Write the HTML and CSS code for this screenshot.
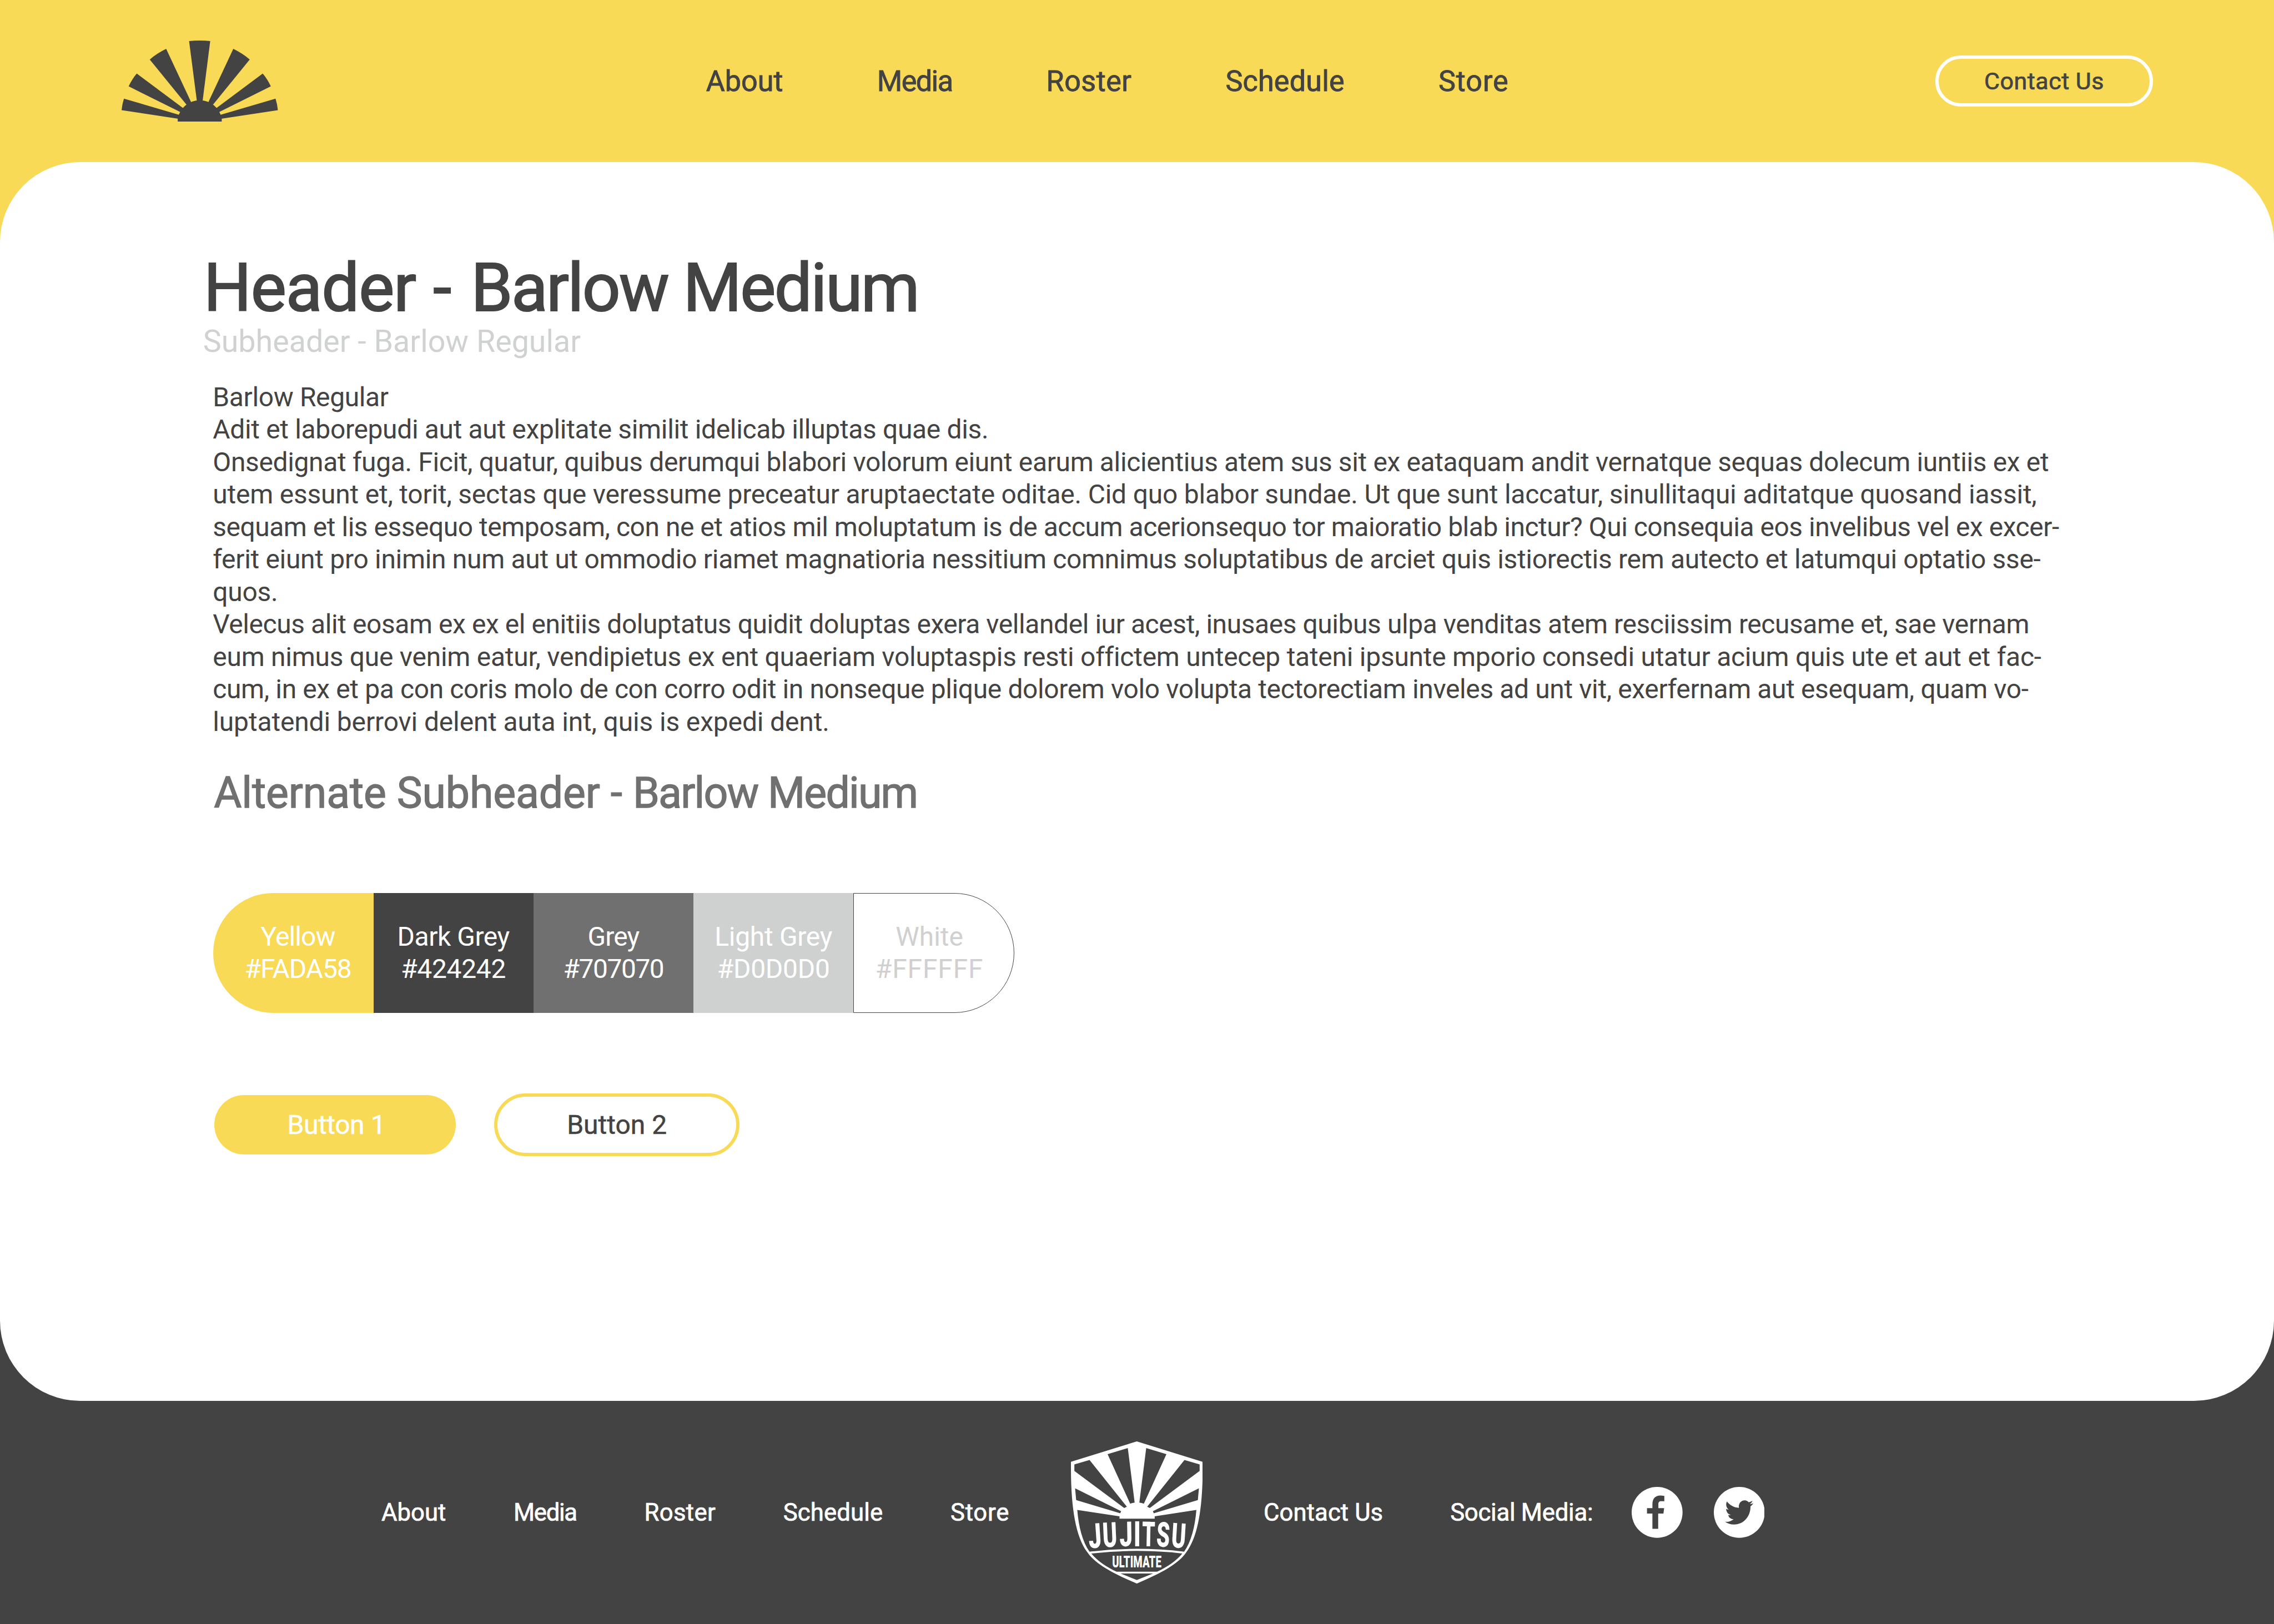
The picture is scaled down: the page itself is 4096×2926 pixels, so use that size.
FILE: index.html
```html
<!DOCTYPE html>
<html lang="en">
<head>
<meta charset="utf-8">
<title>Jujitsu Ultimate Style Guide</title>
<link rel="stylesheet" href="styles.css">
</head>
<body>
<div class="page">
  <header class="top">
    <svg class="logo" viewBox="75 75 866 450" fill="#434343" aria-label="Jujitsu Ultimate">
      <path d="M449 78Q508 72 566 78L522 425H494Z"/>
      <g id="rays">
        <path d="M322 121Q272 145 231 180L445 443L467 431Z"/>
        <path d="M159 258Q132 290 114 329L412 477L428 459Z"/>
        <path d="M88 397Q78 428 75 461L400 510L405 490Z"/>
      </g>
      <use href="#rays" transform="matrix(-1 0 0 1 1016 0)"/>
      <path d="M386 525V508A124 124 0 0 1 630 508V525Z"/>
    </svg>
    <nav class="menu medium">
      <a class="about">About</a>
      <a class="media">Media</a>
      <a class="roster">Roster</a>
      <a class="schedule">Schedule</a>
      <a class="store">Store</a>
    </nav>
    <a class="contact medium">Contact Us</a>
  </header>

  <main class="card">
    <h1 class="title medium">Header <span class="dash">-</span> <span class="face">Barlow Medium</span></h1>
    <p class="subtitle">Subheader - Barlow Regular</p>
    <div class="copy">
      <p class="l1">Barlow Regular</p>
      <p class="l2">Adit et laborepudi aut aut explitate similit idelicab illuptas quae dis.</p>
      <p class="l3">Onsedignat fuga. Ficit, quatur, quibus derumqui blabori volorum eiunt earum alicientius atem sus sit ex eataquam andit vernatque sequas dolecum iuntiis ex et</p>
      <p class="l4">utem essunt et, torit, sectas que veressume preceatur aruptaectate oditae. Cid quo blabor sundae. Ut que sunt laccatur, sinullitaqui aditatque quosand iassit,</p>
      <p class="l5">sequam et lis essequo temposam, con ne et atios mil moluptatum is de accum acerionsequo tor maioratio blab inctur? Qui consequia eos invelibus vel ex excer-</p>
      <p class="l6">ferit eiunt pro inimin num aut ut ommodio riamet magnatioria nessitium comnimus soluptatibus de arciet quis istiorectis rem autecto et latumqui optatio sse-</p>
      <p class="l7">quos.</p>
      <p class="l8">Velecus alit eosam ex ex el enitiis doluptatus quidit doluptas exera vellandel iur acest, inusaes quibus ulpa venditas atem resciissim recusame et, sae vernam</p>
      <p class="l9">eum nimus que venim eatur, vendipietus ex ent quaeriam voluptaspis resti offictem untecep tateni ipsunte mporio consedi utatur acium quis ute et aut et fac-</p>
      <p class="l10">cum, in ex et pa con coris molo de con corro odit in nonseque plique dolorem volo volupta tectorectiam inveles ad unt vit, exerfernam aut esequam, quam vo-</p>
      <p class="l11">luptatendi berrovi delent auta int, quis is expedi dent.</p>
    </div>
    <h2 class="alt medium">Alternate Subheader - <span class="face">Barlow Medium</span></h2>
    <div class="swatches">
      <div class="swatch yellow"><span>Yellow</span><span class="hex">#FADA58</span></div>
      <div class="swatch dark"><span>Dark Grey</span><span class="hex">#424242</span></div>
      <div class="swatch grey"><span>Grey</span><span class="hex">#707070</span></div>
      <div class="swatch light"><span>Light Grey</span><span class="hex">#D0D0D0</span></div>
      <div class="swatch white"><span>White</span><span class="hex">#FFFFFF</span></div>
    </div>
    <div class="buttons medium">
      <a class="btn solid">Button 1</a>
      <a class="btn outline">Button 2</a>
    </div>
  </main>

  <footer class="bottom medium">
    <nav class="links">
      <a class="about">About</a>
      <a class="media">Media</a>
      <a class="roster">Roster</a>
      <a class="schedule">Schedule</a>
      <a class="store">Store</a>
    </nav>
    <svg class="shield" viewBox="115 67 730 788">
      <path fill="#fff" d="M480 67L845 180C847 420 822 590 755 680C712 745 620 795 480 855C340 795 248 745 205 680C138 590 113 420 115 180Z"/>
      <g fill="#434343">
        <g id="gaps">
          <path d="M430 104L318 138L443 412Q455 407 468 406Z"/>
          <path d="M218 170L134 195V231L410 436L425 429Z"/>
          <path d="M138 327L144 392L388 465L393 454Z"/>
        </g>
        <use href="#gaps" transform="matrix(-1 0 0 1 962 0)"/>
        <path d="M150 447L384 482V495H579V482L810 447C802 540 782 622 742 678Q480 647 218 678C178 622 158 540 150 447Z"/>
        <path d="M228 688Q480 660 732 688C700 727 650 762 592 789H368C310 762 260 727 228 688Z"/>
        <path d="M390 799H570L480 835Z"/>
      </g>
      <g class="mark">
        <text transform="translate(252 657) rotate(-4) scale(.68 1)">J</text>
        <text transform="translate(333 652) rotate(-2.5) scale(.64 1)">U</text>
        <text transform="translate(421 648) rotate(-1) scale(.68 1)">J</text>
        <text transform="translate(482 648) scale(.68 1)">I</text>
        <text transform="translate(544 648) rotate(1) scale(.6 1)">T</text>
        <text transform="translate(623 651) rotate(2.5) scale(.62 1)">S</text>
        <text transform="translate(708 656) rotate(3.5) scale(.64 1)">U</text>
      </g>
      <text class="tag" x="343" y="764" textLength="273" lengthAdjust="spacingAndGlyphs">ULTIMATE</text>
    </svg>
    <a class="foot-contact">Contact Us</a>
    <span class="social">Social Media:</span>
    <svg class="icon" viewBox="165 143 282 282">
      <circle cx="306" cy="284" r="141" fill="#fff"/>
      <path fill="#434343" d="M280 375V291H250V261H280V240C280 206 298 191 324 191Q336 191 346 193V222H329C317 222 313 228 313 238V261H345L341 291H312V375Z"/>
    </svg>
    <svg class="icon twitter" viewBox="618 143 282 282">
      <circle cx="759" cy="284" r="141" fill="#fff"/>
      <path fill="#434343" transform="translate(680 202) scale(6.54 6.87)" d="M23.953 4.57a10 10 0 01-2.825.775 4.958 4.958 0 002.163-2.723c-.951.555-2.005.959-3.127 1.184a4.92 4.92 0 00-8.384 4.482C7.69 8.095 4.067 6.13 1.64 3.162a4.822 4.822 0 00-.666 2.475c0 1.71.87 3.213 2.188 4.096a4.904 4.904 0 01-2.228-.616v.06a4.923 4.923 0 003.946 4.827 4.996 4.996 0 01-2.212.085 4.936 4.936 0 004.604 3.417 9.867 9.867 0 01-6.102 2.105c-.39 0-.779-.023-1.17-.067a13.995 13.995 0 007.557 2.209c9.053 0 13.998-7.496 13.998-13.985 0-.21 0-.42-.015-.63A9.935 9.935 0 0024 4.59z"/>
    </svg>
  </footer>
</div>
</body>
</html>
```
FILE: styles.css
```css
/* 1rem is one forty-second of the window's width */
html { font-size: calc(100vw / 42); }
* { box-sizing: border-box; }
body { margin: 0; font-family: Roboto, "Liberation Sans", sans-serif; color: #434343; overflow: hidden; }
h1, h2, p { margin: 0; }

/* a weight between regular and medium */
.medium { font-weight: 400; -webkit-text-stroke: .017em currentColor; }

.page {
  height: 100vh;
  display: grid;
  grid-template-rows: 2.995rem 22.885rem 1fr;
  background: linear-gradient(#f9da56 50%, #434343 50%);
}

.top { display: flex; align-items: center; padding: 0 2.24rem 0 2.25rem; }
.logo { width: 2.887rem; height: 1.5rem; }
.menu { display: flex; gap: 1.734rem; margin-left: 7.903rem; font-size: .535rem; }
.about { letter-spacing: 0; }
.media { letter-spacing: -.03em; }
.roster { letter-spacing: .008em; }
.schedule { letter-spacing: .003em; }
.store { letter-spacing: .018em; }
.contact {
  display: flex; align-items: center; justify-content: center;
  width: 4.01rem; height: .937rem; margin-left: auto;
  border: .063rem solid #fff; border-radius: .47rem;
  font-size: .442rem; letter-spacing: .01em;
}

.card { background: #fff; border-radius: 1.48rem; padding: 1.71rem 0 0 3.93rem; }
.title { margin-left: -.17rem; font-size: 1.24rem; line-height: 1.24rem; letter-spacing: -.01em; white-space: nowrap; }
.title .dash { padding: 0 .06em 0 .02em; }
.title .face { letter-spacing: -.0225em; }
.subtitle { margin: .069rem 0 0 -.18rem; font-size: .57rem; line-height: .6rem; color: #d0d2d1; }
.copy { margin-top: .427rem; font-size: .492rem; line-height: .6rem; white-space: nowrap; }
.l1 { letter-spacing: -.0077em; }
.l2 { letter-spacing: -.007em; }
.l3 { letter-spacing: -.0076em; }
.l4 { letter-spacing: -.0045em; }
.l5 { letter-spacing: -.01em; }
.l6 { letter-spacing: -.0064em; }
.l7 { letter-spacing: -.006em; }
.l8 { letter-spacing: -.0089em; }
.l9 { letter-spacing: -.0054em; }
.l10 { letter-spacing: -.0078em; }
.l11 { letter-spacing: -.0029em; }
.alt { margin: .608rem 0 0 .02rem; font-size: .79rem; line-height: .8rem; letter-spacing: -.0015em; color: #707070; }
.alt .face { letter-spacing: -.0235em; }

.swatches { display: grid; grid-template-columns: repeat(4, 2.956rem) 2.975rem; height: 2.215rem; margin: 1.45rem 0 0 .01rem; font-size: .492rem; line-height: .6rem; color: #fff; }
.swatch { display: flex; flex-direction: column; align-items: center; justify-content: center; }
.yellow { background: #f9da56; border-radius: 1.11rem 0 0 1.11rem; padding-left: .17rem; letter-spacing: -.018em; }
.dark { background: #434343; letter-spacing: -.01em; }
.grey { background: #707070; letter-spacing: -.018em; }
.light { background: #cfd1d0; letter-spacing: -.006em; }
.white { border: 1px solid #434343; border-radius: 0 1.11rem 1.11rem 0; padding-right: .17rem; color: #d0d0d0; }
.yellow .hex { letter-spacing: -.022em; }
.dark .hex { letter-spacing: -.007em; }
.grey .hex { letter-spacing: -.031em; }
.white .hex { letter-spacing: .018em; }

.buttons { display: flex; align-items: center; gap: .708rem; margin: 1.49rem 0 0 .033rem; font-size: .492rem; -webkit-text-stroke-width: .011em; }
.btn { display: flex; align-items: center; justify-content: center; border-radius: .58rem; }
.solid { width: 4.46rem; height: 1.1rem; background: #f9da56; color: #fff; letter-spacing: -.008em; padding-left: .04rem; }
.outline { width: 4.527rem; height: 1.155rem; border: .065rem solid #f9da56; }

.bottom { display: flex; align-items: center; padding-left: 7.045rem; color: #fff; font-size: .448rem; }
.links { display: flex; gap: 1.247rem; }
.shield { width: 2.434rem; height: 2.627rem; margin: 0 1.123rem 0 1.137rem; -webkit-text-stroke: 0; }
.mark { fill: #fff; font-size: 191px; font-weight: 900; text-anchor: middle; }
.tag { fill: #fff; font-size: 88px; font-weight: 900; }
.foot-contact { letter-spacing: .002em; }
.social { margin: 0 .72rem 0 1.24rem; letter-spacing: -.006em; }
.icon { width: .94rem; height: .94rem; }
.twitter { margin-left: .57rem; }
```
